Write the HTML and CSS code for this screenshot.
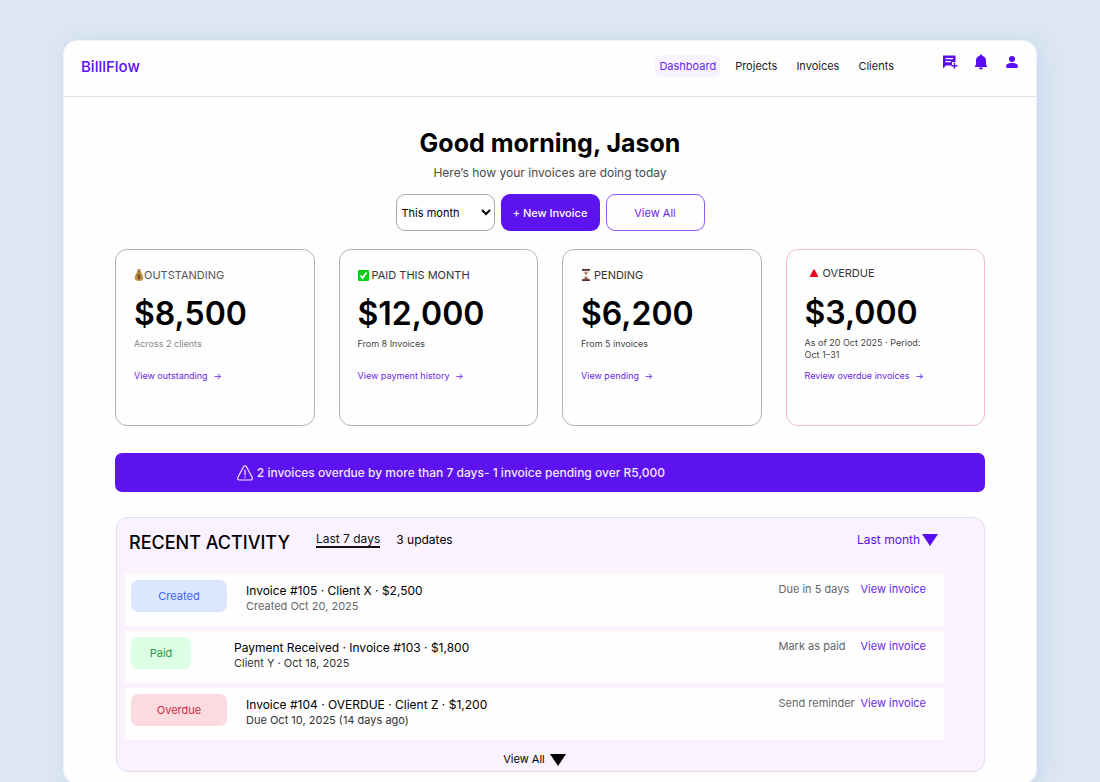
FILE: index.html
```html
<!DOCTYPE html>
<html lang="en">
<head>
    <meta charset="UTF-8">
    <meta name="viewport" content="width=device-width, initial-scale=1.0">
    <title>BilllFlow Dashboard</title>
    <link rel="stylesheet" href="styles.css">
</head>
<body>
    <div class="window">
        <!-- Top bar -->
        <header class="topbar">
            <a href="#" class="logo">BilllFlow</a>
            <nav class="nav">
                <a href="#" class="active">Dashboard</a>
                <a href="#">Projects</a>
                <a href="#">Invoices</a>
                <a href="#">Clients</a>
            </nav>
            <div class="icons">
                <button class="icon-btn" aria-label="New message">
                    <svg width="16" height="16" viewBox="0 0 16 16">
                        <path fill="currentColor" fill-rule="evenodd" d="M1 1.500h12.500V8H10v3.500H4L1 14.500zM3.500 4v1.200H11V4zM3.500 7v1.200H9V7z"/>
                        <path stroke="currentColor" stroke-width="1.400" d="M12.500 8.800v6M9.500 11.800h6"/>
                    </svg>
                </button>
                <button class="icon-btn" aria-label="Notifications">
                    <svg width="16" height="16" viewBox="0 0 16 16">
                        <path fill="currentColor" d="M8 .5c.8 0 1.300.5 1.300 1.200C11.700 2.300 13 4.200 13 6.500v4l1 1.500v1H2v-1l1-1.500v-4c0-2.300 1.300-4.200 3.700-4.800C6.700 1 7.200.5 8 .5zM6 13.500h4c0 1.200-.8 2-2 2s-2-.8-2-2z"/>
                    </svg>
                </button>
                <button class="icon-btn" aria-label="Account">
                    <svg width="16" height="16" viewBox="0 0 16 16">
                        <circle cx="8" cy="5" r="3" fill="currentColor"/>
                        <path fill="currentColor" d="M2 12.500C2 10 4.500 9 8 9s6 1 6 3.500c0 .9-.6 1.500-1.500 1.500h-9C2.600 14 2 13.400 2 12.500z"/>
                    </svg>
                </button>
            </div>
        </header>

        <main class="content">
            <!-- Greeting -->
            <section class="greeting">
                <h1>Good morning, Jason</h1>
                <p>Here’s how your invoices are doing today</p>
                <div class="actions">
                    <select class="btn period" aria-label="Period">
                        <option>This month</option>
                        <option>Last month</option>
                    </select>
                    <button class="btn primary">+ New Invoice</button>
                    <button class="btn outline">View All</button>
                </div>
            </section>

            <!-- Summary cards -->
            <section class="cards">
                <article class="card muted">
                    <h2>
                        <svg width="10" height="12" viewBox="0 0 10 12">
                            <path fill="#c0964a" d="M3.200 0h3.600l-.6 2.500C8 4 9.300 6.500 9.300 9c0 2-1.300 3-4.300 3S.7 11 .7 9c0-2.500 1.300-5 3.100-6.500z"/>
                            <path fill="#6b4a1d" d="M3.300 2.300h3.400v1H3.300z"/>
                            <path fill="none" stroke="#5e4418" stroke-width=".9" d="M6.600 6.200c-1-.8-3.200-.8-3.200.4 0 1.400 3.300.7 3.300 2.100 0 1.200-2.500 1.200-3.400.4M5 5v5.400"/>
                        </svg>
                        <span class="label">OUTSTANDING</span>
                    </h2>
                    <p class="amount">$8,500</p>
                    <p class="note">Across 2 clients</p>
                    <a href="#">View outstanding <span class="arrow">→</span></a>
                </article>
                <article class="card">
                    <h2>
                        <svg width="11" height="11" viewBox="0 0 11 11">
                            <rect width="11" height="11" rx="1" fill="#12cc1c"/>
                            <path fill="none" stroke="#fff" stroke-width="1.800" d="M2.500 5.500l2 2.500 4-5.500"/>
                        </svg>
                        <span class="label">PAID THIS MONTH</span>
                    </h2>
                    <p class="amount">$12,000</p>
                    <p class="note">From 8 Invoices</p>
                    <a href="#">View payment history <span class="arrow">→</span></a>
                </article>
                <article class="card">
                    <h2>
                        <svg width="10" height="12" viewBox="0 0 10 12">
                            <path fill="#e6d9d0" d="M2 1.500h6C8 4 6 5 5.500 6 6 7 8 8 8 10.500H2C2 8 4 7 4.500 6 4 5 2 4 2 1.500z"/>
                            <path fill="#9a5c3c" d="M3 3.500h4L5.200 5.600h-.4zM5 7.500L7.500 10.500h-5z"/>
                            <path fill="#50302a" d="M1 0h8v1.700H1zM1 10.300h8V12H1z"/>
                        </svg>
                        <span class="label">PENDING</span>
                    </h2>
                    <p class="amount">$6,200</p>
                    <p class="note">From 5 invoices</p>
                    <a href="#">View pending <span class="arrow">→</span></a>
                </article>
                <article class="card overdue">
                    <h2>
                        <svg width="8" height="8" viewBox="0 0 8 8">
                            <path fill="#f5001d" d="M3.400.5h1.200L8 7v1H0V7z"/>
                        </svg>
                        <span class="label">OVERDUE</span>
                    </h2>
                    <p class="amount">$3,000</p>
                    <p class="note">As of 20 Oct 2025 · Period:<br>Oct 1–31</p>
                    <a href="#">Review overdue invoices <span class="arrow">→</span></a>
                </article>
            </section>

            <!-- Overdue alert -->
            <div class="alert" role="alert">
                <svg width="16" height="16" viewBox="0 0 16 16" fill="none" stroke="currentColor" stroke-width="1.200" stroke-linecap="round">
                    <path d="M6.600 1.500c.6-1 2.200-1 2.800 0l5.800 11c.6 1.100-.2 2.500-1.500 2.500H2.300C1 15 .2 13.600.8 12.500zM8 5v5M8 12v.5"/>
                </svg>
                <span>2 invoices overdue by more than 7 days- 1 invoice pending over R5,000</span>
            </div>

            <!-- Recent activity -->
            <section class="activity">
                <div class="activity-head">
                    <h2>RECENT ACTIVITY</h2>
                    <a href="#" class="range">Last 7 days</a>
                    <span class="count">3 updates</span>
                    <button class="drop">Last month
                        <svg width="16" height="12" viewBox="0 0 16 12"><path fill="currentColor" d="M0 0h16L8 12z"/></svg>
                    </button>
                </div>
                <ul class="rows">
                    <li class="row">
                        <span class="tag created">Created</span>
                        <div class="info">
                            <h3>Invoice #105 · Client X · $2,500</h3>
                            <p class="soft">Created Oct 20, 2025</p>
                        </div>
                        <span class="status">Due in 5 days</span>
                        <a href="#">View invoice</a>
                    </li>
                    <li class="row">
                        <span class="tag paid">Paid</span>
                        <div class="info">
                            <h3>Payment Received · Invoice #103 · $1,800</h3>
                            <p>Client Y · Oct 18, 2025</p>
                        </div>
                        <span class="status">Mark as paid</span>
                        <a href="#">View invoice</a>
                    </li>
                    <li class="row">
                        <span class="tag late">Overdue</span>
                        <div class="info">
                            <h3>Invoice #104 · OVERDUE · Client Z · $1,200</h3>
                            <p>Due Oct 10, 2025 (14 days ago)</p>
                        </div>
                        <span class="status">Send reminder</span>
                        <a href="#">View invoice</a>
                    </li>
                </ul>
                <button class="view-all">View All
                    <svg width="16" height="12" viewBox="0 0 16 12"><path fill="currentColor" d="M0 0h16L8 12z"/></svg>
                </button>
            </section>
        </main>
    </div>
</body>
</html>
```
FILE: styles.css
```css
* {
    box-sizing: border-box;
}
body {
    margin: 0;
    padding: 40px 63px 0;
    background: #dde7f3;
    font-family: Inter, "Liberation Sans", sans-serif;
    color: #000;
}
h1, h2, h3, p, ul {
    margin: 0;
    padding: 0;
}
a {
    color: #6a1fe8;
    text-decoration: none;
}
button {
    font-family: inherit;
    border: none;
    background: none;
    padding: 0;
    cursor: pointer;
}
.window {
    background: #fefefe;
    border: 1px solid #edf2fb;
    border-radius: 14px;
    padding-bottom: 11px;
    box-shadow: 4px 2px 20px rgba(170, 195, 225, 0.45);
}

/* Top bar */
.topbar {
    display: flex;
    align-items: center;
    height: 56px;
    padding: 0 16px 5px 17px;
    border-bottom: 1px solid #e2e2e6;
}
.logo {
    font-size: 15px;
    font-weight: 500;
    color: #5a0df0;
    margin-right: auto;
}
.nav {
    display: flex;
    gap: 11px;
    margin-right: 44px;
}
.nav a {
    padding: 4px;
    border-radius: 6px;
    font-size: 11px;
    line-height: 14px;
    color: #222;
}
.nav .active {
    background: #f8f3ff;
    color: #6a1fe8;
}
.icons {
    display: flex;
    gap: 15px;
    padding-bottom: 8px;
}
.icon-btn {
    display: flex;
    color: #5a0df0;
}

.content {
    padding: 32px 51px 0;
}

/* Greeting */
.greeting {
    text-align: center;
}
.greeting h1 {
    font-size: 25px;
    line-height: 28px;
    font-weight: 700;
}
.greeting p {
    margin-top: 8px;
    font-size: 12px;
    line-height: 16px;
    color: #4a4a4f;
}
.actions {
    display: flex;
    justify-content: center;
    gap: 6px;
    margin-top: 13px;
}
.btn {
    width: 99px;
    height: 37px;
    border-radius: 9px;
    font-family: inherit;
    font-size: 11px;
}
.period {
    border: 1px solid #aaa;
    background: #fff;
    color: #000;
    padding-left: 1px;
}
.primary {
    background: #5d12f0;
    color: #fff;
    font-weight: 500;
}
.outline {
    border: 1px solid #8b5cf0;
    color: #6a1fe8;
}

/* Summary cards */
.cards {
    display: grid;
    grid-template-columns: repeat(4, 1fr);
    gap: 24px;
    margin-top: 18px;
}
.card {
    display: flex;
    flex-direction: column;
    align-items: flex-start;
    height: 177px;
    padding: 18px;
    border: 1px solid #b4b4b6;
    border-radius: 12px;
}
.card h2 {
    display: flex;
    align-items: center;
    gap: 3px;
    font-size: 11px;
    line-height: 14px;
    font-weight: 400;
    color: #333;
}
.card.muted h2 {
    gap: 0;
    color: #555;
}
.amount {
    margin-top: 14px;
    font-size: 32px;
    line-height: 36px;
    font-weight: 600;
}
.note {
    height: 26px;
    margin-top: 6px;
    font-size: 9px;
    line-height: 12px;
    color: #444;
}
.muted .note {
    color: #888;
}
.card a {
    margin-top: 6px;
    font-size: 9px;
    line-height: 12px;
}
.arrow {
    margin-left: 3px;
}
.card.overdue {
    border-color: #f3b9c6;
    padding-top: 16px;
}
.overdue h2 {
    gap: 5px;
    padding-left: 5px;
}
.overdue .amount {
    margin-top: 15px;
}
.overdue a {
    margin-top: 7px;
}

/* Alert */
.alert {
    display: flex;
    align-items: center;
    gap: 4px;
    margin-top: 27px;
    padding: 11px 14%;
    border-radius: 7px;
    background: #5d12f0;
    color: #f1e9ff;
    font-size: 12px;
    line-height: 17px;
    font-weight: 500;
}

/* Recent activity */
.activity {
    margin-top: 25px;
    margin-left: 1px;
    padding: 10px 40px 3px 8px;
    border: 1px solid #e3daf3;
    border-radius: 12px;
    background: #faf2ff;
}
.activity-head {
    display: flex;
    align-items: flex-start;
    padding: 4px 6px 20px 4px;
    font-size: 12px;
    line-height: 15px;
}
.activity-head h2 {
    font-size: 18px;
    line-height: 22px;
    font-weight: 500;
}
.range {
    margin-left: 26px;
    border-bottom: 2px solid #111;
    line-height: 14px;
    color: #111;
}
.count {
    margin-left: 16px;
}
.drop {
    display: flex;
    align-items: center;
    gap: 2px;
    margin-left: auto;
    font-size: 12px;
    line-height: 15px;
    color: #5a0df0;
}
.rows {
    display: grid;
    gap: 5px;
    list-style: none;
}
.row {
    display: flex;
    align-items: flex-start;
    height: 52px;
    padding: 6px 18px 0 6px;
    background: #fefefe;
    font-size: 11px;
    line-height: 18px;
}
.tag {
    width: 96px;
    margin-right: 19px;
    border-radius: 7px;
    text-align: center;
    line-height: 32px;
}
.created {
    background: #dbe6ff;
    color: #4663f0;
}
.paid {
    width: 60px;
    margin-right: 43px;
    background: #dcffe6;
    color: #2a9a4a;
}
.late {
    background: #fcdbe0;
    color: #d02a43;
}
.info {
    flex: 1;
    padding-top: 2px;
}
.info h3 {
    font-size: 12px;
    line-height: 17px;
    font-weight: 400;
}
.info p {
    font-size: 11px;
    line-height: 15px;
    color: #333;
}
.info .soft {
    color: #666;
}
.status {
    width: 82px;
    color: #666;
}
.view-all {
    display: flex;
    align-items: center;
    gap: 5px;
    margin: 11px auto 0;
    font-size: 11px;
    line-height: 17px;
}
```
